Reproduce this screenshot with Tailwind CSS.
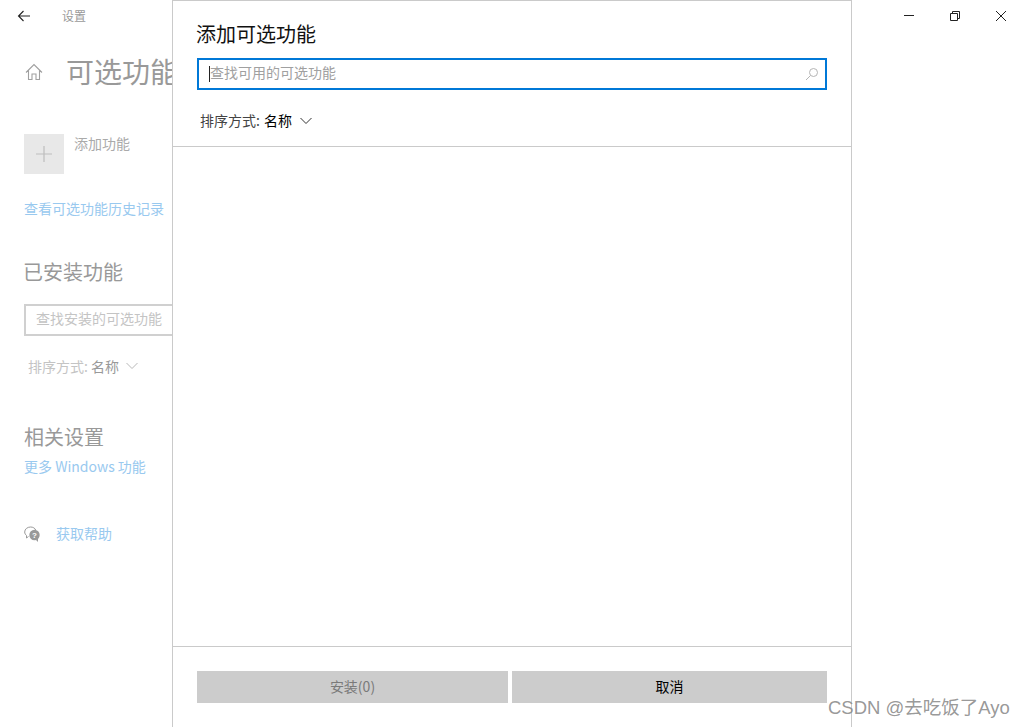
<!DOCTYPE html>
<html lang="zh-CN">
<head>
    <meta charset="UTF-8">
    <meta name="viewport" content="width=device-width, initial-scale=1.0">
    <title>设置 - 添加可选功能</title>
    <script src="https://cdn.jsdelivr.net/npm/@tailwindcss/browser@4"></script>
</head>
<body class="bg-white overflow-hidden">
<div class="relative flex w-[1024px] h-[727px] bg-white font-['Noto_Sans_CJK_SC','Liberation_Sans',sans-serif]">

    <!-- Settings page, dimmed behind the dialog -->
    <div class="w-[172px] h-full shrink-0 overflow-hidden">
        <div class="h-8 flex items-center pl-[17px] w-[300px]">
            <svg class="w-3.5 h-3.5" viewBox="0 0 14 14" fill="none" stroke="#222" stroke-width="1.1"><path d="M13 7H1.5M6.5 2L1.5 7l5 5"/></svg>
            <span class="ml-[31px] text-xs leading-4 text-[#9a9a9a]">设置</span>
        </div>
        <div class="flex items-center h-10 mt-[19px] pl-[25px] w-[300px]">
            <svg class="w-[18px] h-[18px] mt-0.5" viewBox="0 0 18 18" fill="none" stroke="#a0a0a0" stroke-width="1.1"><path d="M1 9.5L9 1.5l8 8M3.5 7.5V16.5H7V11h4v5.500h3.500V7.500"/></svg>
            <span class="ml-[23px] text-[28px] leading-10 text-[#999]">可选功能</span>
        </div>
        <div class="flex mt-[43px] pl-6">
            <div class="w-10 h-10 bg-[#e8e8e8] flex items-center justify-center">
                <svg class="w-4 h-4" viewBox="0 0 16 16" stroke="#bdbdbd" stroke-width="1.2"><path d="M8 0v16M0 8h16"/></svg>
            </div>
            <span class="ml-2.5 text-sm leading-[18px] text-[#aaa]">添加功能</span>
        </div>
        <a class="block mt-6 pl-6 text-sm leading-5 text-[#99c9ef] whitespace-nowrap">查看可选功能历史记录</a>
        <h2 class="mt-[41px] pl-[23px] text-xl leading-[26px] text-[#999] font-normal">已安装功能</h2>
        <div class="mt-[19px] ml-6 w-[200px] h-8 border-2 border-[#d0d0d0] pl-2.5 text-sm leading-6 text-[#c4c4c4] whitespace-nowrap">查找安装的可选功能</div>
        <div class="flex items-center mt-5 pl-7 h-5 text-sm whitespace-nowrap">
            <span class="text-[#c4c4c4]">排序方式:</span>
            <span class="ml-[3px] text-[#999]">名称</span>
            <svg class="ml-[7px] w-3 h-2" viewBox="0 0 12 8" fill="none" stroke="#b8b8b8"><path d="M.5 1l5.500 5.500L11.500 1"/></svg>
        </div>
        <h2 class="mt-12 pl-6 text-xl leading-[26px] text-[#999] font-normal">相关设置</h2>
        <a class="block mt-1.5 pl-6 text-sm leading-5 text-[#99c9ef] whitespace-nowrap">更多 Windows 功能</a>
        <div class="flex items-center mt-[47px] pl-6 h-5">
            <svg class="w-4 h-4 mt-0.5" viewBox="0 0 16 16">
                <path d="M6.500 1C3.500 1 .7 3 .7 6c0 1.500.8 2.700 1.800 3.500V12l2-1.500" fill="none" stroke="#999" stroke-width="1"/>
                <path d="M6.500 1c2.500 0 4.500 1.200 5.200 3" fill="none" stroke="#999" stroke-width="1"/>
                <circle cx="10.500" cy="9" r="5.200" fill="#999"/>
                <path d="M12 14l2 2v-4z" fill="#999"/>
                <text x="10.500" y="12" font-size="8" font-weight="700" fill="#fff" text-anchor="middle" font-family="Liberation Sans">?</text>
            </svg>
            <a class="ml-4 text-sm leading-5 text-[#99c9ef]">获取帮助</a>
        </div>
    </div>

    <!-- Add optional feature dialog -->
    <div class="w-[680px] h-full shrink-0 flex flex-col bg-white border-x border-t border-[#cacaca] text-[#111]">
        <div class="h-[146px] shrink-0 border-b border-[#cacaca] px-6">
            <h1 class="mt-[21px] -ml-px text-xl leading-6 font-normal text-[#111]">添加可选功能</h1>
            <div class="mt-[12px] h-8 border-2 border-[#0078d7] flex items-center pl-2.5 pr-1.5">
                <span class="w-px h-4 bg-[#222]"></span>
                <span class="flex-1 text-sm leading-[18px] pb-1 text-[#a0a0a0]">查找可用的可选功能</span>
                <svg class="w-3.5 h-3.5" viewBox="0 0 14 14" fill="none" stroke="#b5b5b5" stroke-width="1"><circle cx="8.500" cy="5.500" r="4"/><path d="M5.500 8.500L1 13"/></svg>
            </div>
            <div class="flex items-center mt-5 pl-[3px] h-5 text-sm">
                <span class="text-[#444]">排序方式:</span>
                <span class="ml-1 text-black">名称</span>
                <svg class="ml-2 w-3 h-2 mt-0.5" viewBox="0 0 12 8" fill="none" stroke="#333"><path d="M.5 1l5.500 5.500L11.500 1"/></svg>
            </div>
        </div>
        <div class="flex-1"></div>
        <div class="h-[81px] shrink-0 border-t border-[#cacaca] px-6 pt-6">
            <div class="flex gap-1">
                <button class="w-[311px] h-8 bg-[#ccc] text-sm leading-[30px] pb-0.5 text-[#7a7a7a]">安装(0)</button>
                <button class="w-[315px] h-8 bg-[#ccc] text-sm leading-[30px] pb-0.5 text-black">取消</button>
            </div>
        </div>
    </div>

    <!-- Window controls -->
    <div class="flex-1 h-8 flex items-center justify-end pr-[17px] gap-[34px]">
        <svg class="w-3 h-3" viewBox="0 0 12 12" stroke="#222" stroke-width="1"><path d="M1 5.500h10"/></svg>
        <svg class="w-3 h-3" viewBox="0 0 12 12" fill="none" stroke="#222" stroke-width="1"><path d="M1.500 3.500h7v7h-7zM3.500 3.500v-2h7v7h-2"/></svg>
        <svg class="w-3 h-3" viewBox="0 0 12 12" stroke="#222" stroke-width="1"><path d="M1 1l10 10M11 1L1 11"/></svg>
    </div>

    <!-- Watermark -->
    <span class="absolute left-[828px] top-[696px] font-['Liberation_Sans','Noto_Sans_CJK_SC',sans-serif] text-[18.5px] leading-6 text-[#8c8c8c]/90 whitespace-nowrap">CSDN @去吃饭了Ayo</span>
</div>
</body>
</html>
